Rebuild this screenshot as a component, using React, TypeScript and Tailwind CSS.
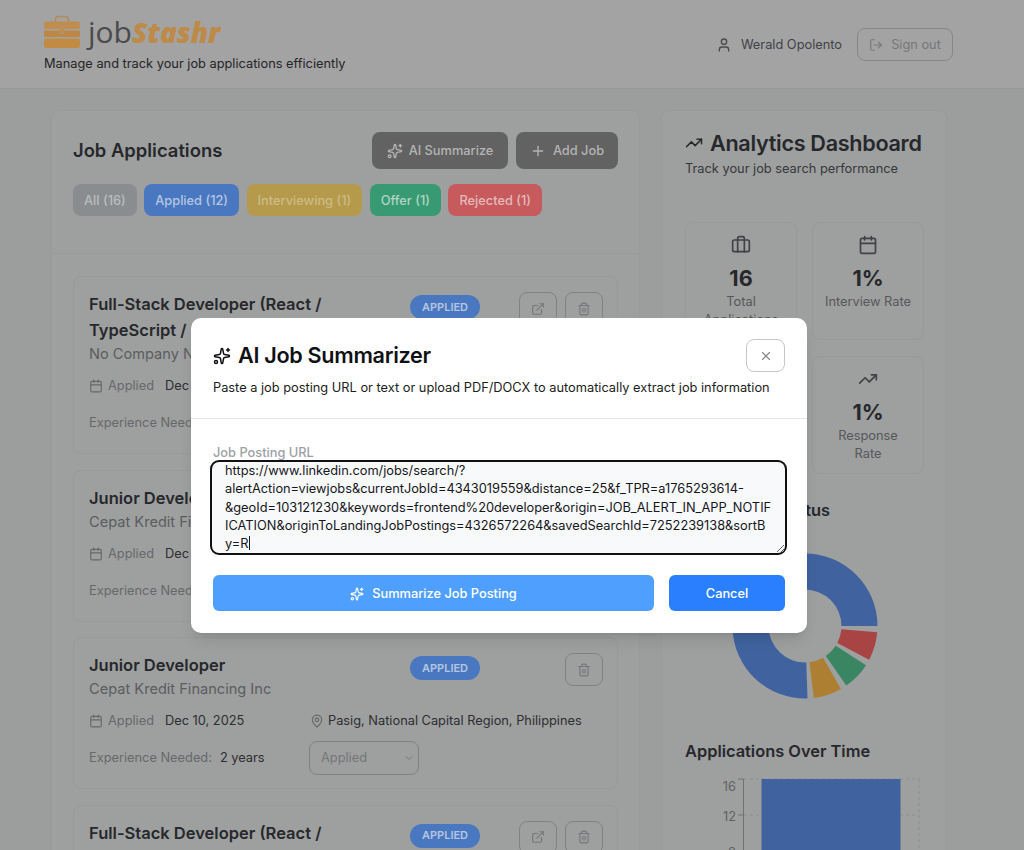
import React, { useEffect, useRef } from 'react';
import {
  Briefcase,
  Calendar,
  ChevronDown,
  ExternalLink,
  LogOut,
  MapPin,
  Plus,
  Sparkles,
  Trash2,
  TrendingUp,
  User,
  X,
} from 'lucide-react';

const jobUrl =
  'https://www.linkedin.com/jobs/search/?alertAction=viewjobs&currentJobId=4343019559&distance=25&f_TPR=a1765293614-&geoId=103121230&keywords=frontend%20developer&origin=JOB_ALERT_IN_APP_NOTIFICATION&originToLandingJobPostings=4326572264&savedSearchId=7252239138&sortBy=R';

const filters = [
  { label: 'All (16)', cls: 'bg-[#8a8d8f] text-[#b9bcbe]' },
  { label: 'Applied (12)', cls: 'bg-[#4a78c0] text-[#b4c6e2]' },
  { label: 'Interviewing (1)', cls: 'bg-[#b59a4c] text-[#cdbb84]' },
  { label: 'Offer (1)', cls: 'bg-[#379a72] text-[#b0d4c4]' },
  { label: 'Rejected (1)', cls: 'bg-[#c65a5c] text-[#e4b9ba]' },
];

const jobs = [
  {
    title: 'Full-Stack Developer (React / TypeScript / Node)',
    company: 'No Company Name',
    date: 'Dec 10, 2025',
    location: 'Manila, Philippines',
    exp: '3 years',
    link: true,
  },
  {
    title: 'Junior Developer',
    company: 'Cepat Kredit Financing Inc',
    date: 'Dec 10, 2025',
    location: 'Pasig, National Capital Region, Philippines',
    exp: '2 years',
    link: false,
  },
  {
    title: 'Junior Developer',
    company: 'Cepat Kredit Financing Inc',
    date: 'Dec 10, 2025',
    location: 'Pasig, National Capital Region, Philippines',
    exp: '2 years',
    link: false,
  },
  {
    title: 'Full-Stack Developer (React / TypeScript / Node)',
    company: 'No Company Name',
    date: 'Dec 10, 2025',
    location: 'Manila, Philippines',
    exp: '3 years',
    link: true,
  },
];

function polar(r: number, deg: number) {
  const a = (deg * Math.PI) / 180;
  return `${100 + r * Math.cos(a)} ${100 - r * Math.sin(a)}`;
}

function slice(from: number, to: number) {
  const large = to - from > 180 ? 1 : 0;
  return `M${polar(72.5, from)} A72.5 72.5 0 ${large} 0 ${polar(72.5, to)} L${polar(36.5, to)} A36.5 36.5 0 ${large} 1 ${polar(36.5, from)} Z`;
}

const slices = [
  { from: 0, to: 272, fill: '#40639f' },
  { from: 277, to: 299.7, fill: '#ad7f33' },
  { from: 304.7, to: 327.3, fill: '#3b8662' },
  { from: 332.3, to: 355, fill: '#a84444' },
];

function Logo() {
  return (
    <svg width="36" height="33" viewBox="0 0 36 33" className="shrink-0">
      <path d="M11.5 7V4.5A3 3 0 0 1 14.5 1.5h7a3 3 0 0 1 3 3V7" fill="none" stroke="#b58a55" strokeWidth="1.4" />
      <rect x="0" y="6.5" width="36" height="7.5" rx="2.5" fill="#c08d4e" />
      <rect x="0" y="15.5" width="36" height="6.5" rx="1" fill="#bd8846" />
      <rect x="0" y="23.5" width="36" height="9.5" rx="2.5" fill="#c28b44" />
      <rect x="15.5" y="12" width="5" height="7" rx="2.5" fill="#c08d4e" stroke="#a89a85" strokeWidth="0.8" />
    </svg>
  );
}

function JobCard({ job }: { job: (typeof jobs)[number] }) {
  return (
    <div className="rounded-lg border border-[#989a9a] bg-[#9e9f9f] pl-[15px] pr-[14px] pt-[14px] pb-[13px]">
      <div className="flex items-start">
        <div className="w-[321px] shrink-0">
          <h3 className="text-[16.5px] leading-[26px] font-semibold text-[#26282c]">{job.title}</h3>
          <p className="text-[14.6px] leading-[22px] text-[#5a5d60]">{job.company}</p>
        </div>
        <span className="mt-[4px] flex h-[24px] w-[70px] shrink-0 items-center justify-center rounded-full bg-[#4a78c0] text-[11px] font-semibold text-[#b4c6e2]">
          APPLIED
        </span>
        <div className="ml-auto flex gap-2 pt-[1px]">
          {job.link && (
            <button className="flex h-[33px] w-[38px] items-center justify-center rounded-lg border border-[#808385] text-[#74777a]">
              <ExternalLink size={14} />
            </button>
          )}
          <button className="flex h-[33px] w-[38px] items-center justify-center rounded-lg border border-[#808385] text-[#74777a]">
            <Trash2 size={14} />
          </button>
        </div>
      </div>
      <div className="mt-[10px] flex h-[22px] items-center text-[12.8px] text-[#2c2e31]">
        <div className="flex w-[220px] items-center">
          <Calendar size={14} className="text-[#66696c]" />
          <span className="ml-[5px] text-[#66696c]">Applied</span>
          <span className="ml-[11px]">{job.date}</span>
        </div>
        <MapPin size={14} className="ml-[1px] text-[#66696c]" />
        <span className="ml-[4px]">{job.location}</span>
      </div>
      <div className="mt-[9px] flex items-center text-[12.8px] text-[#2c2e31]">
        <div className="flex w-[220px]">
          <span className="text-[#66696c]">Experience Needed:</span>
          <span className="ml-[8px]">{job.exp}</span>
        </div>
        <div className="flex h-[34px] w-[110px] items-center justify-between rounded-lg border border-[#808385] pl-[11px] pr-[3px] text-[#74777a]">
          Applied
          <ChevronDown size={12} />
        </div>
      </div>
    </div>
  );
}

function Stat({ icon, value, label }: { icon: React.ReactNode; value: string; label: string }) {
  return (
    <div className="flex h-[118px] flex-col items-center rounded-lg border border-[#989a9a] pt-[12px] text-center">
      <div className="text-[#3f4246]">{icon}</div>
      <div className="mt-[7px] text-[21.6px] leading-[32px] font-bold text-[#26282c]">{value}</div>
      <div className="-mt-[1px] w-[90px] text-[12.8px] leading-[18px] text-[#55585b]">{label}</div>
    </div>
  );
}

export default function App() {
  const inputRef = useRef<HTMLTextAreaElement>(null);

  useEffect(() => {
    const el = inputRef.current;
    if (el) {
      el.focus();
      el.setSelectionRange(jobUrl.length, jobUrl.length);
      el.scrollTop = 0;
    }
  }, []);

  return (
    <div className="relative h-[850px] overflow-hidden bg-[#9c9e9e] font-['Inter',sans-serif]">
      {/* Header */}
      <header className="flex h-[89px] items-start justify-between border-b border-[#989898] bg-[#a3a3a3] pl-[44px] pr-[71px] pt-[15px]">
        <div>
          <div className="flex h-[33px] items-center">
            <Logo />
            <span className="ml-[8px] font-['Open_Sans',sans-serif] text-[30px] leading-none text-[#4a4b4d]">job</span>
            <span className="font-['Open_Sans',sans-serif] text-[28px] leading-none font-extrabold italic tracking-[-0.1px] text-[#bd8a48]">
              Stashr
            </span>
          </div>
          <p className="mt-[6px] text-[12.8px] leading-[20px] text-[#232527]">
            Manage and track your job applications efficiently
          </p>
        </div>
        <div className="flex items-center pt-[13px]">
          <User size={16} className="text-[#4a4d50]" />
          <span className="ml-[9px] text-[12.8px] text-[#3f4246]">Werald Opolento</span>
          <button className="ml-[15px] flex h-[33px] w-[96px] items-center justify-center gap-[8px] rounded-lg border border-[#85888a] text-[12.8px] text-[#75787b]">
            <LogOut size={14} />
            Sign out
          </button>
        </div>
      </header>

      {/* Page */}
      <main className="grid grid-cols-[589px_286px] gap-x-[21px] pl-[51px] pt-[21px]">
        <section className="rounded-lg border border-[#999b9b] bg-[#9e9f9f]">
          <div className="h-[143px] border-b border-[#989a9a] pl-[21px] pr-[21px] pt-[21px]">
            <div className="flex items-center justify-between">
              <h2 className="text-[18.4px] font-semibold text-[#26282c]">Job Applications</h2>
              <div className="flex gap-2">
                <button className="flex h-[37px] w-[136px] items-center justify-center gap-[6px] rounded-lg bg-[#626262] text-[12.8px] font-medium text-[#b4b4b4]">
                  <Sparkles size={16} />
                  AI Summarize
                </button>
                <button className="flex h-[37px] w-[102px] items-center justify-center gap-[7px] rounded-lg bg-[#626262] text-[12.8px] font-medium text-[#b4b4b4]">
                  <Plus size={16} />
                  Add Job
                </button>
              </div>
            </div>
            <div className="mt-[15px] flex gap-[7.5px]">
              {filters.map((f) => (
                <span key={f.label} className={`flex h-[32px] items-center rounded-lg px-[11px] pt-[1px] text-[12.8px] font-medium ${f.cls}`}>
                  {f.label}
                </span>
              ))}
            </div>
          </div>
          <div className="flex flex-col gap-[15.5px] px-[21px] pt-[22px]">
            {jobs.map((job, i) => (
              <JobCard key={i} job={job} />
            ))}
          </div>
        </section>

        <aside className="rounded-lg border border-[#999b9b] bg-[#9e9f9f] pl-[23px] pr-[22px] pt-[16px]">
          <h2 className="flex items-center gap-[7px] text-[21.6px] leading-[32px] font-semibold tracking-[-0.3px] text-[#26282c]">
            <TrendingUp size={18} />
            Analytics Dashboard
          </h2>
          <p className="text-[12.8px] leading-[20px] text-[#35383b]">Track your job search performance</p>

          <div className="mt-[43px] grid grid-cols-2 gap-x-[15px] gap-y-[16px]">
            <Stat icon={<Briefcase size={20} />} value="16" label="Total Applications" />
            <Stat icon={<Calendar size={20} />} value="1%" label="Interview Rate" />
            <Stat icon={<Briefcase size={20} />} value="1" label="Offers Received" />
            <Stat icon={<TrendingUp size={20} />} value="1%" label="Response Rate" />
          </div>

          <h3 className="mt-[22px] text-[16.4px] leading-[28px] font-semibold text-[#26282c]">Application Status</h3>
          <svg width="239" height="200" viewBox="-20 0 239 200" className="mt-[2px] block">
            {slices.map((s) => (
              <path key={s.fill} d={slice(s.from, s.to)} fill={s.fill} />
            ))}
          </svg>

          <h3 className="mt-[11px] text-[16.4px] leading-[28px] font-semibold text-[#26282c]">Applications Over Time</h3>
          <svg width="239" height="100" viewBox="0 0 239 100" className="-mt-[1px] block text-[12.8px]">
            <path d="M59 15H234M59 51H234M59 87H234M234 15V100" fill="none" stroke="#8c8e8e" strokeDasharray="3 3" />
            <rect x="76.5" y="15" width="139" height="85" fill="#40639f" />
            <path d="M58.5 15V100M53 15H58.5M53 51H58.5M53 87H58.5" fill="none" stroke="#707375" />
            <text x="51" y="27" textAnchor="end" fill="#5f6265">16</text>
            <text x="51" y="57" textAnchor="end" fill="#5f6265">12</text>
            <text x="51" y="93" textAnchor="end" fill="#5f6265">8</text>
          </svg>
        </aside>
      </main>

      {/* AI summarizer dialog */}
      <div className="absolute left-[191px] top-[318px] h-[315px] w-[616px] rounded-[10px] bg-white shadow-lg">
        <div className="border-b border-[#e3e5e8] px-[22px] pt-[21px] pb-[20px]">
          <div className="flex items-start justify-between">
            <h2 className="flex h-[33px] items-center gap-[7px] text-[21.6px] font-semibold tracking-[-0.3px] text-[#0f1115]">
              <Sparkles size={18} />
              AI Job Summarizer
            </h2>
            <button className="flex h-[33px] w-[39px] items-center justify-center rounded-lg border border-[#c4c6c9] text-[#85888c]">
              <X size={14} />
            </button>
          </div>
          <p className="mt-[6px] text-[12.8px] leading-[20px] text-[#1b1d20]">
            Paste a job posting URL or text or upload PDF/DOCX to automatically extract job information
          </p>
        </div>
        <div className="px-[22px] pt-[24px]">
          <label className="block text-[12.8px] leading-[20px] font-medium text-[#9da1a6]">Job Posting URL</label>
          <div className="relative -ml-[3px] -mt-[3px] h-[95px] w-[577px]">
            <textarea
              ref={inputRef}
              defaultValue={jobUrl}
              className="block h-full w-full rounded-[9px] border-2 border-[#111] bg-[#f8f9fb] pl-[13px] pr-[13.5px] py-0 text-[12.8px] leading-[18.3px] text-[#15171a] caret-transparent outline-none"
            />
            {/* text caret after the last typed character */}
            <span className="absolute left-[39px] top-[76px] h-[14px] w-px bg-[#15171a]" />
          </div>
          <div className="mt-[20px] flex gap-[15px]">
            <button className="flex h-[36px] w-[441px] items-center justify-center gap-[8px] rounded-[6px] bg-[#4f9ffe] pt-[1px] text-[12.8px] font-medium text-white">
              <Sparkles size={14} />
              Summarize Job Posting
            </button>
            <button className="h-[36px] w-[116px] rounded-[6px] bg-[#2a7fff] pt-[1px] text-[12.8px] font-medium text-white">
              Cancel
            </button>
          </div>
        </div>
      </div>
    </div>
  );
}
